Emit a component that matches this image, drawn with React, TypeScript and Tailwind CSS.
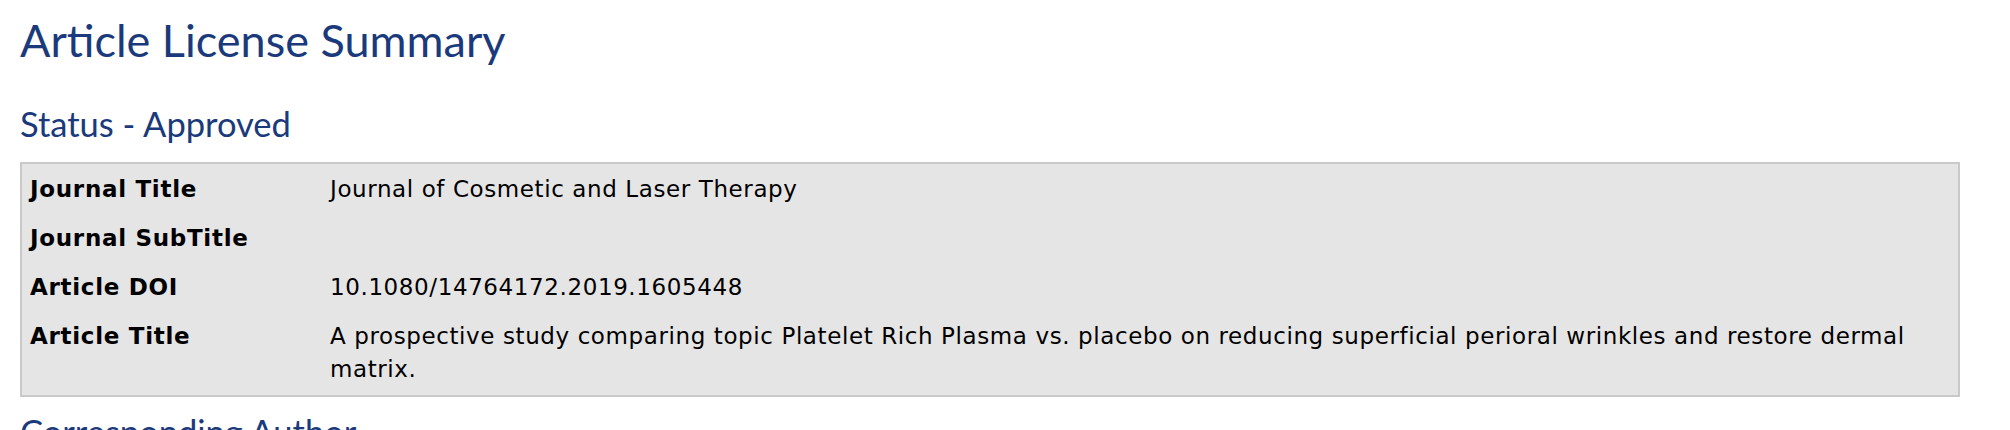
const HEADING_FONT = { fontFamily: "Lato, 'Open Sans', sans-serif" };

type Row = {
  label: string;
  value: string;
};

const rows: Row[] = [
  { label: "Journal Title", value: "Journal of Cosmetic and Laser Therapy" },
  { label: "Journal SubTitle", value: "" },
  { label: "Article DOI", value: "10.1080/14764172.2019.1605448" },
  {
    label: "Article Title",
    value:
      "A prospective study comparing topic Platelet Rich Plasma vs. placebo on reducing superficial perioral wrinkles and restore dermal matrix.",
  },
];

export default function App() {
  return (
    <section className="h-[430px] overflow-hidden bg-white px-[20px] pt-[12px]">
      <h1
        className="m-0 text-[45px] leading-[56px] font-normal text-[#1b3a7b]"
        style={HEADING_FONT}
      >
        Article License Summary
      </h1>

      <h2
        className="mt-[36px] mb-0 text-[34.5px] leading-[40px] font-normal text-[#1b3a7b]"
        style={HEADING_FONT}
      >
        Status - Approved
      </h2>

      <div className="mt-[18px] w-[1940px] border-2 border-[#c9c9c9] bg-[#e5e5e5]">
        <table
          className="w-full border-separate border-spacing-[2px] text-[23px] leading-[33px] tracking-[0.6px] text-black"
          style={{ fontFamily: "'DejaVu Sans', Verdana, sans-serif" }}
        >
          <tbody>
            {rows.map((row) => (
              <tr key={row.label}>
                <td className="w-[298px] px-[6px] py-[7px] align-top font-bold tracking-[0.7px]">
                  {row.label}
                </td>
                <td className="px-[6px] py-[7px] pr-[28px] align-top">
                  {row.value}
                </td>
              </tr>
            ))}
          </tbody>
        </table>
      </div>

      <h2
        className="mt-[15px] mb-0 text-[34.5px] leading-[40px] font-normal text-[#1b3a7b]"
        style={HEADING_FONT}
      >
        Corresponding Author
      </h2>
    </section>
  );
}
